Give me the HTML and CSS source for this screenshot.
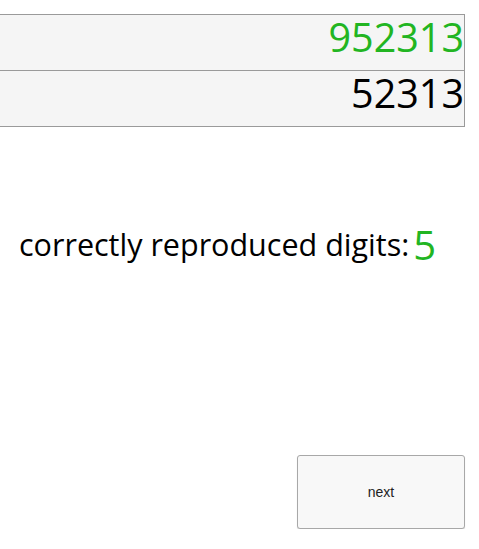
FILE: index.html
```html
<!DOCTYPE html>
<html>
<head>
<meta charset="utf-8">
<link rel="stylesheet" href="styles.css">
</head>
<body>
<div class="display">
  <div class="row target">952313</div>
  <div class="row input">52313</div>
</div>
<div class="result"><span class="label">correctly reproduced digits:</span> <span class="score">5</span></div>
<div class="actions">
  <button class="next">next</button>
</div>
</body>
</html>
```

FILE: styles.css
```css
html, body {
  margin: 0;
  padding: 0;
  background: #ffffff;
  font-family: "Open Sans", "Noto Sans", sans-serif;
}
.display {
  margin-top: 14px;
  width: 465px;
  border: 1px solid #9a9a9a;
  border-left: none;
  background: #f5f5f5;
  box-sizing: border-box;
}
.row {
  height: 55px;
  line-height: 45px;
  text-align: right;
  font-size: 39.5px;
  padding-right: 0;
  color: #000;
}
.row + .row {
  border-top: 1px solid #9a9a9a;
}
.target {
  color: #22b522;
}
.result {
  margin-top: 95px;
  padding-left: 19px;
  height: 44px;
  line-height: 44px;
  white-space: nowrap;
}
.label {
  font-size: 30.5px;
  color: #000;
}
.score {
  font-size: 40px;
  color: #22b522;
  vertical-align: -4px;
  line-height: 44px;
}
.actions {
  margin-top: 189px;
  padding-left: 297px;
}
.next {
  width: 168px;
  height: 74px;
  border: 1px solid #a8a8a8;
  border-radius: 3px;
  background: #f8f8f8;
  box-shadow: 0 1px 1px rgba(0,0,0,0.15);
  font-family: "Liberation Sans", Arial, sans-serif;
  font-size: 14px;
  color: #222;
  padding: 0;
}
```
